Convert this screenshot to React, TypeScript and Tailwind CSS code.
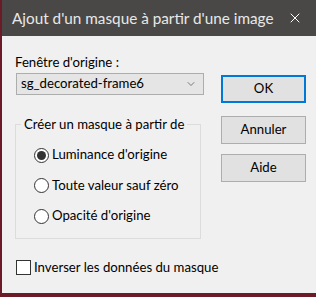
import { ChevronDown, X } from 'lucide-react';

// Windows-style "Ajout d'un masque" dialog (PSP)
const FONT = { fontFamily: '"Segoe UI", Lato, "Noto Sans", sans-serif' };

function Radio({ label, checked = false }: { label: string; checked?: boolean }) {
  return (
    <div className="flex h-[30.5px] items-center">
      <span className="flex h-[15px] w-[15px] items-center justify-center rounded-full border border-[#333] bg-white">
        {checked && <span className="h-[9px] w-[9px] rounded-full bg-[#333]" />}
      </span>
      <span className="ml-[3px] whitespace-nowrap text-[13.2px] text-[#000]">{label}</span>
    </div>
  );
}

function Btn({ label, primary = false, className = '' }: { label: string; primary?: boolean; className?: string }) {
  return (
    <button
      type="button"
      className={
        (primary
          ? 'flex h-[28px] w-[85px] items-center justify-center border-2 border-[#0078d7] bg-[#e1e1e1] text-[13.2px] text-black'
          : 'flex h-[28px] w-[85px] items-center justify-center border border-[#adadad] bg-[#e1e1e1] text-[13.2px] text-black') +
        ' ' +
        className
      }
    >
      {label}
    </button>
  );
}

export default function App() {
  return (
    <div
      className="flex h-[297px] w-[316px] flex-col border-b-4 border-l-2 border-[#6b1a27] bg-[#f0f0f0]"
      style={FONT}
    >
      <div className="flex h-[36px] shrink-0 items-center justify-between bg-[#4a4846] pl-[10px] pr-[13px]">
        <span className="whitespace-nowrap text-[15.3px] text-[#e8e8e8]">Ajout d'un masque à partir d'une image</span>
        <X className="h-[16px] w-[16px] text-white" strokeWidth={1.5} />
      </div>

      <div className="flex flex-1 flex-col pl-[13px] pt-[17px]">
        <div className="flex">
          <div className="flex w-[190px] flex-col">
            <span className="whitespace-nowrap text-[13.2px] leading-[18px] text-black">Fenêtre d'origine :</span>
            <div className="ml-[1px] mt-[2px] flex h-[22px] w-[188px] items-center justify-between border border-[#adadad] bg-[#e5e5e5] pl-[4px] pr-[6px]">
              <span className="whitespace-nowrap text-[13.2px] text-black">sg_decorated-frame6</span>
              <ChevronDown className="h-[12px] w-[12px] text-[#555]" strokeWidth={1.5} />
            </div>

            <fieldset className="mt-[21px] h-[123px] w-[186px] border border-[#dcdcdc] pl-[5px]">
              <legend className="px-[3px] whitespace-nowrap text-[13.2px] leading-[16px] text-black">
                Créer un masque à partir de
              </legend>
              <div className="ml-[13px] mt-[8px] flex flex-col">
                <Radio label="Luminance d'origine" checked />
                <Radio label="Toute valeur sauf zéro" />
                <Radio label="Opacité d'origine" />
              </div>
            </fieldset>
          </div>

          <div className="ml-[16px] mt-[22px] flex flex-col">
            <Btn label="OK" primary />
            <Btn label="Annuler" className="mt-[13px]" />
            <Btn label="Aide" className="mt-[10px]" />
          </div>
        </div>

        <div className="ml-[1px] mt-[19px] flex items-center">
          <span className="h-[15px] w-[15px] border border-[#333] bg-white" />
          <span className="ml-[3px] whitespace-nowrap text-[13.2px] text-black">Inverser les données du masque</span>
        </div>
      </div>
    </div>
  );
}
